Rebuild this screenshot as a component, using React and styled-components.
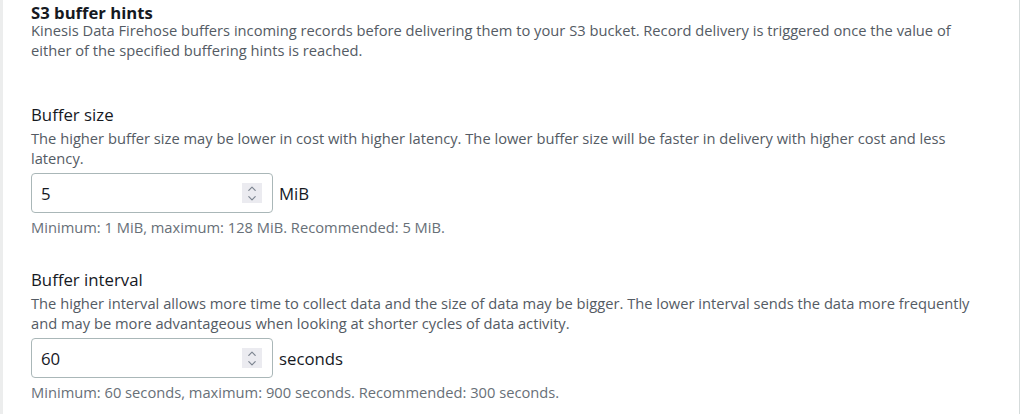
import React from "react";
import styled, { createGlobalStyle } from "styled-components";

const Global = createGlobalStyle`
  html, body { margin: 0; padding: 0; background: #ffffff; }
  body { font-family: "Open Sans", "Noto Sans", Arial, sans-serif; -webkit-font-smoothing: antialiased; }
  * { box-sizing: border-box; }
`;

const Panel = styled.div`
  width: 1020px;
  height: 414px;
  background: #ffffff;
  border-left: 3px solid #eceded;
  border-right: 1px solid #d5dbdb;
  padding: 5px 26px 0 28px;
  overflow: hidden;
`;

const Title = styled.h2`
  margin: 0;
  font-size: 16.7px;
  line-height: 15px;
  font-weight: 700;
  color: #16191f;
`;

const Description = styled.p`
  margin: ${(p) => p.$top || 0}px 0 0;
  font-size: 14.7px;
  line-height: 20px;
  color: #545b64;
`;

const Field = styled.div`
  margin-top: ${(p) => p.$top}px;
  display: flex;
  flex-direction: column;
`;

const Label = styled.label`
  font-size: 16.8px;
  line-height: 22px;
  color: #16191f;
`;

const InputRow = styled.div`
  margin-top: 5px;
  display: flex;
  align-items: center;
  gap: 6px;
`;

const InputBox = styled.div`
  width: 242px;
  height: 40px;
  border: 1px solid #aab7b8;
  border-radius: 4px;
  display: flex;
  align-items: center;
  padding: 0 10px 0 9px;
`;

const Value = styled.span`
  flex: 1;
  font-size: 16.8px;
  color: #16191f;
`;

const Stepper = styled.span`
  width: 20px;
  height: 20px;
  background: #ebebf0;
  display: flex;
  align-items: center;
  justify-content: center;
`;

const Unit = styled.span`
  font-size: 16.8px;
  color: #16191f;
`;

const Constraint = styled.div`
  margin-top: 5px;
  font-size: 14.7px;
  line-height: 18px;
  color: #687078;
`;

const StepIcon = () => (
  <svg width="10" height="17" viewBox="0 0 10 17" fill="none" stroke="#7d8590" strokeWidth="1.2" strokeLinecap="round" strokeLinejoin="round">
    <path d="M1.8 5.4 L5 2.2 L8.2 5.4" />
    <path d="M1.8 11.6 L5 14.8 L8.2 11.6" />
  </svg>
);

const NumberField = ({ top, label, help, value, unit, constraint }) => (
  <Field $top={top}>
    <Label>{label}</Label>
    <Description $top={2}>{help}</Description>
    <InputRow>
      <InputBox>
        <Value>{value}</Value>
        <Stepper><StepIcon /></Stepper>
      </InputBox>
      <Unit>{unit}</Unit>
    </InputRow>
    <Constraint>{constraint}</Constraint>
  </Field>
);

export default function App() {
  return (
    <>
      <Global />
      <Panel>
        <Title>S3 buffer hints</Title>
        <Description>
          Kinesis Data Firehose buffers incoming records before delivering them to your S3 bucket. Record delivery is triggered once the value of either of the specified buffering hints is reached.
        </Description>
        <NumberField
          top={44}
          label="Buffer size"
          help="The higher buffer size may be lower in cost with higher latency. The lower buffer size will be faster in delivery with higher cost and less latency."
          value="5"
          unit="MiB"
          constraint="Minimum: 1 MiB, maximum: 128 MiB. Recommended: 5 MiB."
        />
        <NumberField
          top={33}
          label="Buffer interval"
          help="The higher interval allows more time to collect data and the size of data may be bigger. The lower interval sends the data more frequently and may be more advantageous when looking at shorter cycles of data activity."
          value="60"
          unit="seconds"
          constraint="Minimum: 60 seconds, maximum: 900 seconds. Recommended: 300 seconds."
        />
      </Panel>
    </>
  );
}
